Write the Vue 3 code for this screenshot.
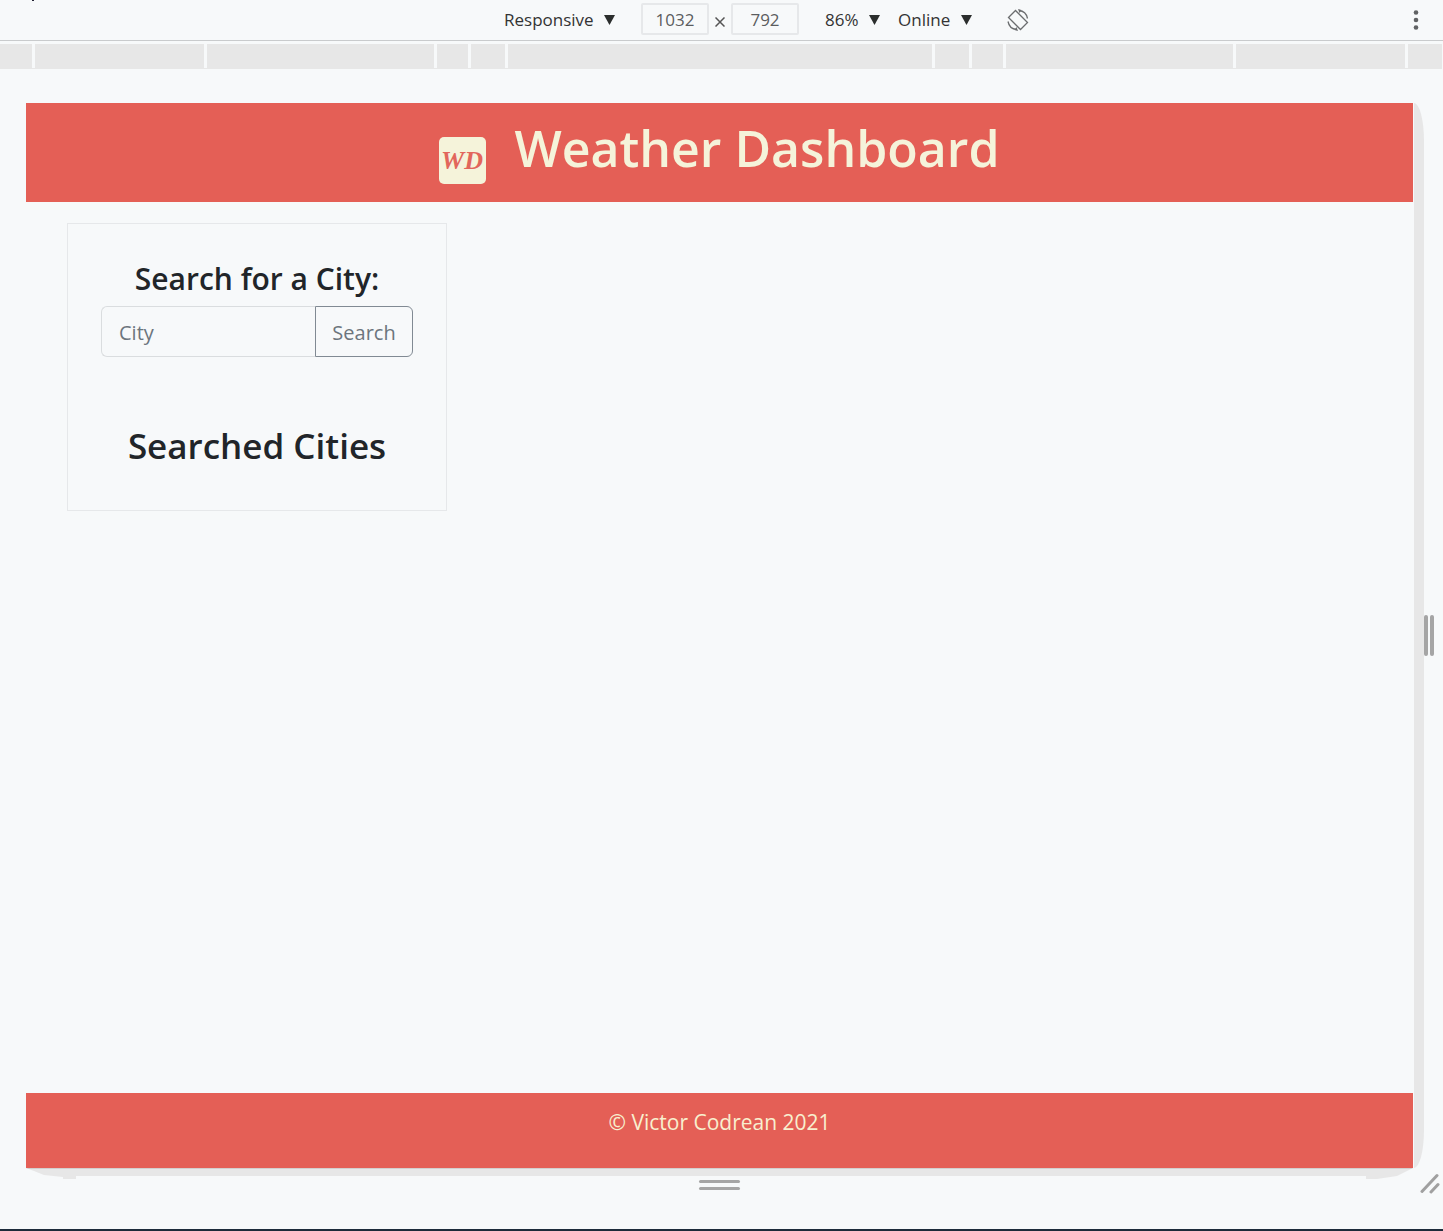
<script setup>
import { ref } from 'vue'

const city = ref('')
const width = ref('1032')
const height = ref('792')
const breakpoints = [32, 169, 227, 31, 34, 424, 34, 31, 227, 169, 34]
</script>

<template>
  <div class="page">
    <div class="toolbar">
      <div class="controls">
        <label class="picker device">
          <select aria-label="Device"><option>Responsive</option></select>
          <svg viewBox="0 0 11 10"><path d="M0 0H11L5.500 10Z" /></svg>
        </label>
        <input v-model="width" class="size" aria-label="Viewport width" />
        <svg class="times" viewBox="0 0 10 10"><path d="M0.500 0.500L9.500 9.500M9.500 0.500L0.500 9.500" /></svg>
        <input v-model="height" class="size" aria-label="Viewport height" />
        <label class="picker zoom">
          <select aria-label="Zoom"><option>86%</option></select>
          <svg viewBox="0 0 11 10"><path d="M0 0H11L5.500 10Z" /></svg>
        </label>
        <label class="picker network">
          <select aria-label="Throttling"><option>Online</option></select>
          <svg viewBox="0 0 11 10"><path d="M0 0H11L5.500 10Z" /></svg>
        </label>
        <button class="rotate" type="button" aria-label="Rotate">
          <svg viewBox="0 0 22 22">
            <path d="M1.500 8.500L8.500 1.500L20.500 13.500L13.500 20.500Z" />
            <path d="M12 1.500Q19 2 20.500 9.500" />
            <path d="M1 12.500Q2.500 20 9.500 20.500" />
            <path class="tip" d="M11 0L14.500 1L12.500 4ZM11 22L7.500 21L9.500 18Z" />
          </svg>
        </button>
      </div>
      <button class="more" type="button" aria-label="More options">
        <svg viewBox="0 0 6 20"><circle cx="3" cy="2.500" r="2.300" /><circle cx="3" cy="10" r="2.300" /><circle cx="3" cy="17.500" r="2.300" /></svg>
      </button>
    </div>

    <div class="ruler">
      <span v-for="(size, i) in breakpoints" :key="i" :style="{ flexGrow: size }"></span>
    </div>

    <div class="stage">
      <div class="frame">
        <header>
          <svg class="logo" viewBox="0 0 47 47">
            <rect width="47" height="47" rx="5" />
            <text x="23" y="32" text-anchor="middle">WD</text>
          </svg>
          <h1>Weather Dashboard</h1>
        </header>
        <main>
          <section class="card">
            <form @submit.prevent>
              <label for="city">Search for a City:</label>
              <div class="group">
                <input id="city" v-model="city" placeholder="City" />
                <button type="submit">Search</button>
              </div>
            </form>
            <h2>Searched Cities</h2>
          </section>
        </main>
        <footer>© Victor Codrean 2021</footer>
      </div>
      <div class="edge-right"></div>
      <div class="grip vertical"><i></i><i></i></div>
      <div class="edge-bottom"></div>
      <div class="grip horizontal"><i></i><i></i></div>
      <svg class="corner" viewBox="0 0 20 21"><path d="M2 18.500L17 2.500M11 19L18 11.500" /></svg>
    </div>
  </div>
</template>

<style>
body {
  margin: 0;
  background: #f7f9fa;
}
</style>

<style scoped>
* {
  box-sizing: border-box;
}
.page {
  display: flex;
  flex-direction: column;
  min-height: 100vh;
  border-bottom: 2px solid #1d2b3a;
  background: #f7f9fa;
  color: #212529;
  font-family: "Open Sans", "Noto Sans", sans-serif;
}
input,
select,
button {
  margin: 0;
  padding: 0;
  border: 0;
  background: transparent;
  color: inherit;
  font: inherit;
}
.toolbar {
  position: relative;
  display: grid;
  grid-template-columns: 1fr auto 1fr;
  align-items: center;
  height: 41px;
  border-bottom: 1px solid #c9cbcd;
  color: #333;
  font-size: 17px;
}
.toolbar::before {
  content: "";
  position: absolute;
  top: 0;
  left: 32px;
  width: 2px;
  height: 1px;
  background: #223;
}
.controls {
  grid-column: 2;
  display: flex;
  align-items: center;
  height: 38px;
  padding-left: 90px;
}
.picker {
  display: flex;
  align-items: center;
  justify-content: space-between;
}
.picker select {
  appearance: none;
  line-height: 24px;
}
.picker svg {
  width: 11px;
  height: 10px;
  fill: #2b2e2d;
}
.device {
  width: 111px;
  margin-right: 26px;
}
.zoom {
  width: 55px;
  margin: 0 18px 0 26px;
}
.network {
  width: 74px;
  margin-right: 35px;
}
.size {
  width: 68px;
  height: 32px;
  margin-bottom: 2px;
  border: 2px solid #e6e8ea;
  border-radius: 2px;
  color: #5b5d5f;
  text-align: center;
}
.times {
  width: 10px;
  height: 10px;
  margin: 4px 6px 0;
  fill: none;
  stroke: #555;
  stroke-width: 1.5;
}
.rotate {
  width: 22px;
  height: 22px;
}
.rotate svg {
  display: block;
  fill: none;
  stroke: #6b6d6f;
  stroke-width: 1.3;
}
.rotate .tip {
  fill: #6b6d6f;
  stroke: none;
}
.more {
  justify-self: end;
  width: 6px;
  height: 20px;
  margin-right: 24px;
}
.more svg {
  display: block;
  fill: #606264;
}
.ruler {
  display: flex;
  gap: 3px;
  height: 25px;
  margin: 3px 1px 0 0;
  border-bottom: 1px solid #e7e7e7;
}
.ruler span {
  flex-basis: 0;
  background: #e7e7e7;
}
.stage {
  flex: 1;
  display: grid;
  grid-template-columns: 1fr 11px 19px;
  grid-template-rows: 1fr 11px auto;
  padding: 34px 0 35px 26px;
}
.frame {
  display: flex;
  flex-direction: column;
}
header {
  display: flex;
  justify-content: center;
  gap: 28px;
  height: 99px;
  background: #e45f56;
  color: #f5f3da;
}
.logo {
  width: 47px;
  height: 47px;
  margin-top: 34px;
  fill: #f5f3da;
}
.logo text {
  fill: #e2665c;
  font: italic bold 26px "Liberation Serif", serif;
}
h1,
h2 {
  margin: 0;
  font-weight: 600;
}
h1 {
  margin-top: 13px;
  font-size: 50px;
  line-height: 64px;
}
main {
  flex: 1;
  padding: 21px 41px;
}
.card {
  width: 28%;
  min-width: 380px;
  max-width: 380px;
  padding: 34px 33px 41px;
  border: 1px solid #e6e8ea;
  text-align: center;
}
.card label {
  display: block;
  margin-bottom: 8px;
  font-size: 30px;
  font-weight: 600;
  line-height: 42px;
  height: 40px;
}
.group {
  display: flex;
  height: 51px;
  font-size: 20px;
}
.group input {
  flex: 1;
  min-width: 0;
  padding: 1px 17px 0;
  border: 1px solid #dadddf;
  border-right: 0;
  border-radius: 6px 0 0 6px;
}
.group input::placeholder {
  color: #6c757d;
  opacity: 1;
}
.group button {
  width: 98px;
  padding-top: 1px;
  border: 1px solid #818a93;
  border-radius: 0 6px 6px 0;
  color: #6c757d;
}
h2 {
  margin-top: 66px;
  font-size: 35px;
  line-height: 46px;
}
footer {
  height: 75px;
  padding-top: 12px;
  background: #e45f56;
  color: #f8efcf;
  font-size: 21px;
  line-height: 34px;
  text-align: center;
}
.edge-right {
  margin-left: 1px;
  border-radius: 0 10px 10px 0 / 0 38px 38px 0;
  background: #e7e7e7;
}
.edge-bottom {
  grid-column: 1;
  border-top: 1px solid #d3cfce;
  background: #e7e7e7;
  clip-path: polygon(0 0, 8px 3px, 18px 7px, 37px 9px, 37px 11px, 50px 11px, 50px 8px, calc(100% - 47px) 8px, calc(100% - 47px) 11px, calc(100% - 36px) 11px, calc(100% - 16px) 8px, 100% 0);
}
.grip {
  display: flex;
}
.grip i {
  border-radius: 2px;
  background: #a5a5a5;
}
.vertical {
  gap: 2px;
  align-self: center;
}
.vertical i {
  width: 4px;
  height: 41px;
}
.horizontal {
  grid-area: 3 / 1;
  flex-direction: column;
  gap: 4px;
  justify-self: center;
  margin-top: 1px;
}
.horizontal i {
  width: 41px;
  height: 3px;
}
.corner {
  grid-area: 2 / 3 / 4 / 4;
  justify-self: end;
  width: 20px;
  height: 21px;
  margin: 5px 3px 0 0;
  fill: none;
  stroke: #a0a0a0;
  stroke-width: 3;
  stroke-linecap: round;
}
</style>
